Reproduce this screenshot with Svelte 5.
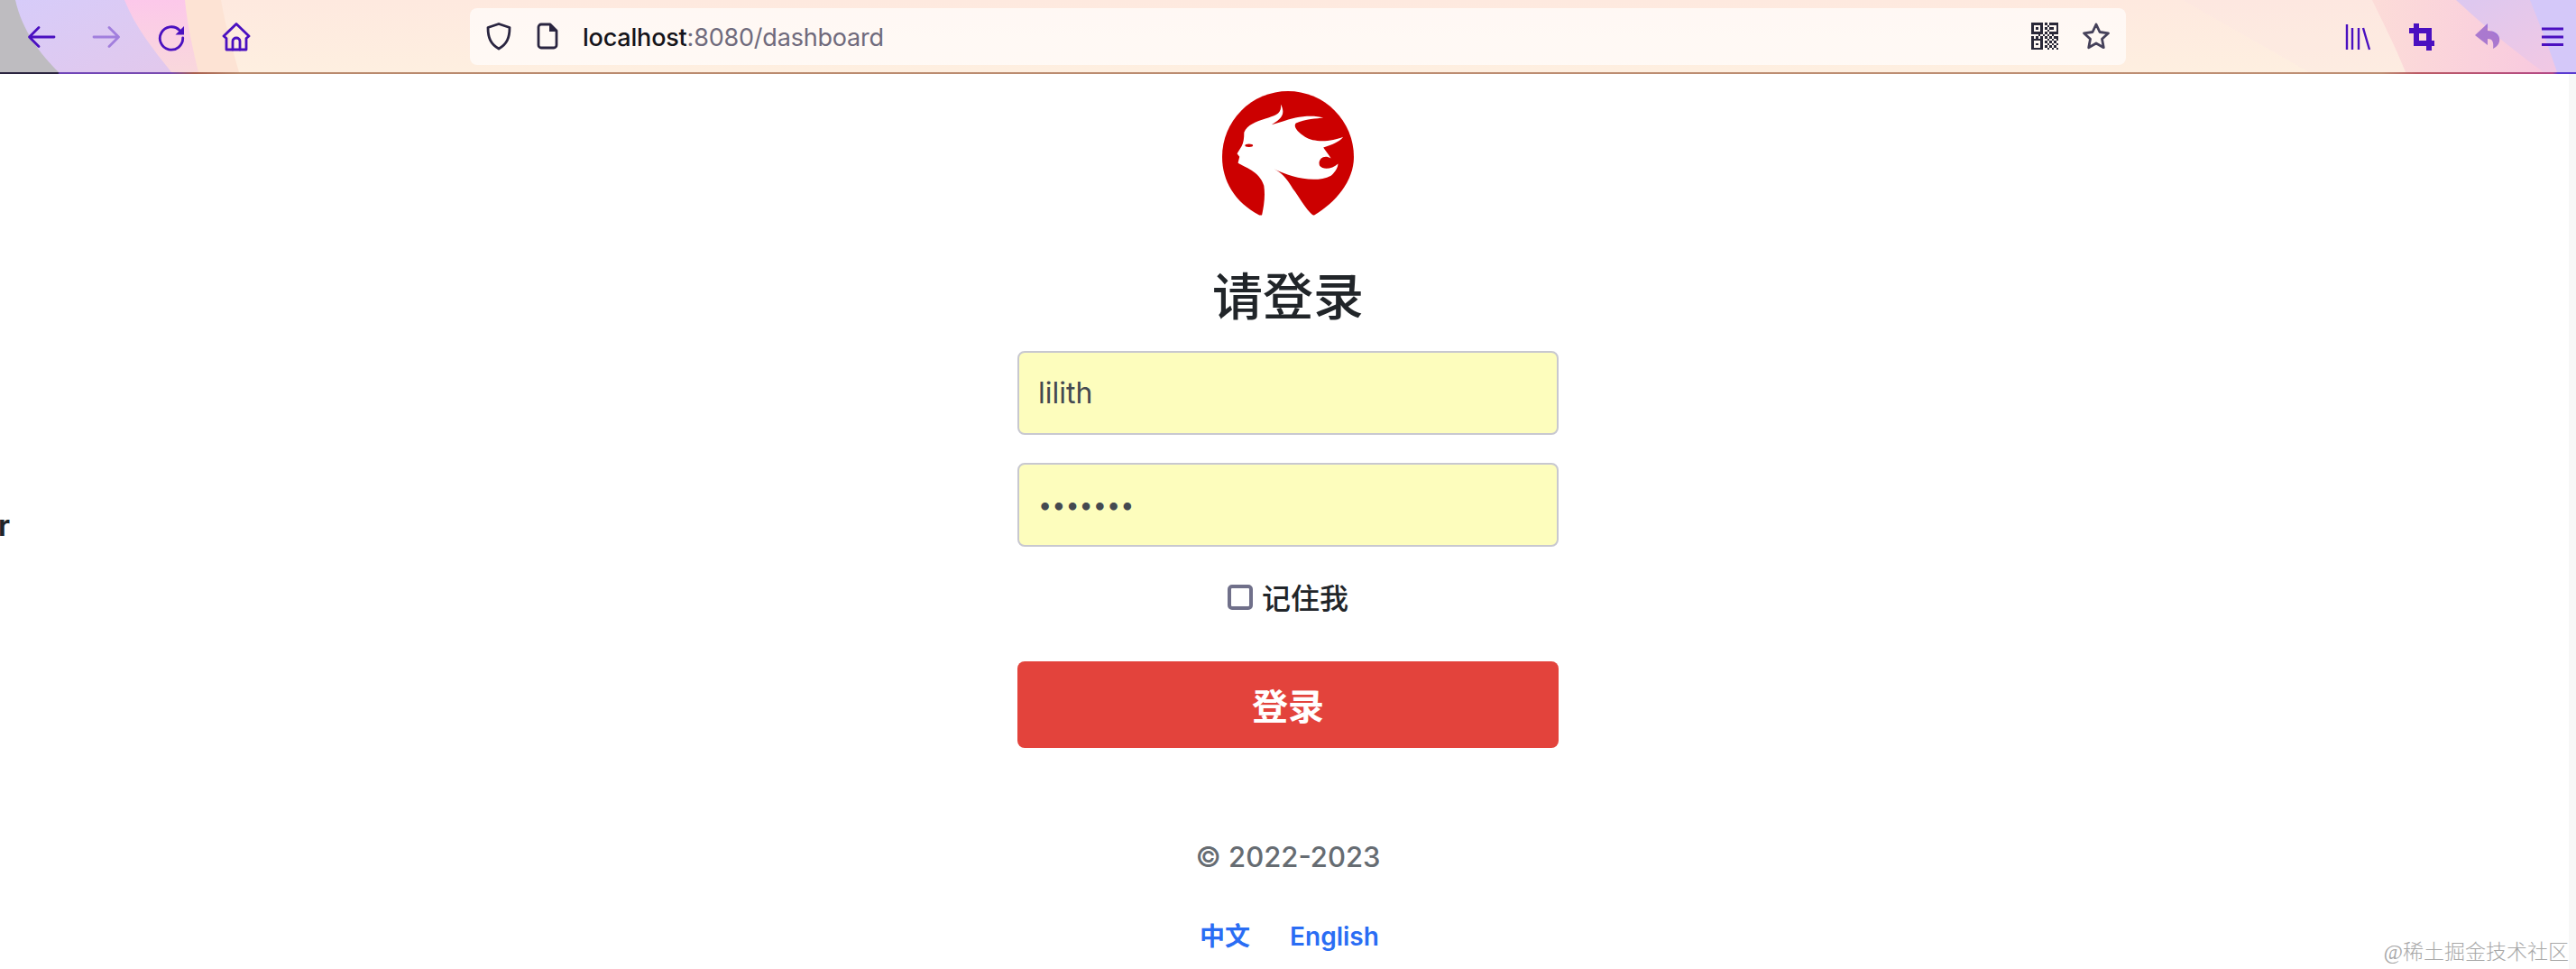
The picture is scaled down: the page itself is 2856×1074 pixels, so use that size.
<script>
  // QR glyph in the address bar, 1 = filled cell
  const qr = [
    "111110101111",
    "100010010001",
    "101010101101",
    "100010010001",
    "111110101111",
    "000101010100",
    "101010101011",
    "111110010101",
    "100010101010",
    "101010010101",
    "100010101010",
    "111110010101"
  ];
  const cells = [];
  qr.forEach((row, y) => {
    [...row].forEach((c, x) => {
      if (c === "1") cells.push({ x, y });
    });
  });
</script>

<div class="page">
  <header class="toolbar">
    <svg class="theme" viewBox="0 0 2856 80" preserveAspectRatio="none" aria-hidden="true">
      <defs>
        <linearGradient id="base" x1="0" y1="0" x2="0" y2="1">
          <stop offset="0" stop-color="#fee9df" />
          <stop offset="1" stop-color="#feefe0" />
        </linearGradient>
        <linearGradient id="pinkLeft" x1="0" y1="0" x2="0" y2="1">
          <stop offset="0" stop-color="#fcc8ea" />
          <stop offset="1" stop-color="#f9d8dc" />
        </linearGradient>
        <linearGradient id="lavLeft" x1="0" y1="0" x2="1" y2="1">
          <stop offset="0" stop-color="#d6ccfa" />
          <stop offset="1" stop-color="#e2c8ec" />
        </linearGradient>
        <linearGradient id="pinkRight" x1="0" y1="0" x2="1" y2="0">
          <stop offset="0" stop-color="#fcdcd8" />
          <stop offset="1" stop-color="#f8c6e0" />
        </linearGradient>
        <linearGradient id="lavRight" x1="0" y1="0" x2="1" y2="1">
          <stop offset="0" stop-color="#dcc8f0" />
          <stop offset="1" stop-color="#f4c8e2" />
        </linearGradient>
      </defs>
      <rect width="2856" height="80" fill="url(#base)" />
      <path d="M2420 0H2640L2680 80H2560Z" fill="#fbe6e4" opacity="0.3" />
      <path d="M0 0H245C250 30 258 55 265 80H0Z" fill="#fde3d4" />
      <path d="M0 0H205C208 30 214 55 220 80H0Z" fill="url(#pinkLeft)" />
      <path d="M0 0H138C150 30 170 55 190 80H0Z" fill="url(#lavLeft)" />
      <path d="M0 0H17C25 35 45 60 65 80H0Z" fill="#bebcc0" />
      <path d="M2630 0H2856V80H2667C2655 50 2642 25 2630 0Z" fill="url(#pinkRight)" />
      <path d="M2723 0H2856V80H2820C2785 55 2750 25 2723 0Z" fill="url(#lavRight)" />
      <path d="M2805 0H2856V80H2835C2825 50 2815 25 2805 0Z" fill="#d4c8f9" />
    </svg>

    <nav class="nav-left">
      <svg class="icon" viewBox="0 0 32 32" aria-hidden="true"><path d="M30 16H3M13 5.500 2.500 16 13 26.500" class="stroke" /></svg>
      <svg class="icon faded" viewBox="0 0 32 32" aria-hidden="true"><path d="M2 16h27M19 5.500 29.500 16 19 26.500" class="stroke" /></svg>
      <svg class="icon" viewBox="0 0 32 32" aria-hidden="true">
        <path d="M25 8.500A12.700 12.700 0 1 0 28.700 17" class="stroke" />
        <path d="M30 4v9.500h-9.500z" class="fill" />
      </svg>
      <svg class="icon" viewBox="0 0 32 32" aria-hidden="true">
        <path d="M16 1.500 30 15l-3 2.500v12.500H5V17.500L2 15Z" class="stroke" />
        <path d="M12 30V20.500a4 3.500 0 0 1 8 0V30" class="stroke" />
      </svg>
    </nav>

    <div class="urlbar">
      <svg class="icon dark" viewBox="0 0 32 32" aria-hidden="true"><path d="M16 2.500 28 6.500C28 18 25 25 16 30 7 25 4 18 4 6.500Z" class="stroke" /></svg>
      <svg class="icon dark page-icon" viewBox="0 0 32 32" aria-hidden="true">
        <path d="M19 3H9a3 3 0 0 0-3 3v20a3 3 0 0 0 3 3h14a3 3 0 0 0 3-3V10Z" class="stroke" />
        <path d="M18 3v8h8z" class="fill" />
      </svg>
      <span class="url"><span class="url-host">localhost</span><span class="url-rest">:8080/dashboard</span></span>
      <svg class="qr" viewBox="0 0 12 12" aria-hidden="true" shape-rendering="crispEdges">
        {#each cells as c}
          <rect x={c.x} y={c.y} width="1" height="1" />
        {/each}
      </svg>
      <svg class="icon muted star" viewBox="0 0 32 32" aria-hidden="true"><path d="M16 3l4 8.500 9.500 1.300-7 6.500 1.800 9.400L16 24l-8.300 4.700 1.800-9.400-7-6.500L12 11.500Z" class="stroke" /></svg>
    </div>

    <nav class="nav-right">
      <svg class="icon" viewBox="0 0 32 32" aria-hidden="true">
        <path d="M4 2v28M10 6v24M17 6v24M22 6l7 24" class="stroke thin" />
      </svg>
      <svg class="icon" viewBox="0 0 32 32" aria-hidden="true">
        <path d="M9 1v22h20M1 9h22v22" class="stroke bold" />
      </svg>
      <svg class="icon faded-strong" viewBox="0 0 32 32" aria-hidden="true">
        <path d="M16 1 2 14l14 11v-7c5 0 7 3 6 11 6-3 8-8 7-12-1-5-6-8-13-8z" class="fill" />
      </svg>
      <svg class="icon" viewBox="0 0 32 32" aria-hidden="true">
        <path d="M4 7h24M4 16h24M4 24.500h24" class="stroke thick-line" />
      </svg>
    </nav>
  </header>
  <div class="toolbar-line"></div>

  <main class="login">
    <svg class="logo" viewBox="198 65 432 408" role="img" aria-label="logo">
      <path d="M320 472C240 430 198 360 198 281A216 216 0 1 1 630 281C630 360 570 430 500 472Z" fill="#cc0000" />
      <path fill="#fff" d="M328 474H498C470 450 450 410 430 385C410 350 390 330 368 320C420 345 500 370 555 342C572 328 578 312 578 303C560 320 530 325 518 310C510 290 530 270 555 285C545 270 535 258 530 250C560 240 585 230 595 215C560 230 500 235 470 215C445 200 430 180 440 170C470 155 510 155 530 152C490 140 430 150 395 165L360 175C385 160 410 145 390 108C395 140 370 145 340 155C310 165 280 175 270 200C270 220 268 235 262 245L247 270L255 280L250 300C270 315 320 325 335 375C340 410 335 440 328 474Z" />
      <ellipse cx="286" cy="243" rx="13" ry="5" fill="#cc0000" />
    </svg>

    <h1 class="title">请登录</h1>

    <form class="form">
      <input class="field" type="text" value="lilith" />
      <input class="field secret" type="password" value="1234567" />
      <label class="remember">
        <input class="check" type="checkbox" />
        <span>记住我</span>
      </label>
      <button class="submit" type="button">登录</button>
    </form>

    <p class="copy">© 2022-2023</p>
    <div class="langs">
      <a href="#zh">中文</a>
      <a href="#en">English</a>
    </div>
  </main>

  <span class="stray">r</span>
  <span class="watermark">@稀土掘金技术社区</span>
  <div class="scroll-edge"></div>
</div>

<style>
  :global(body) {
    margin: 0;
    background: #fff;
  }
  .page {
    position: relative;
    height: 1074px;
    overflow: hidden;
    font-family: Inter, "Noto Sans CJK SC", sans-serif;
    color: #212529;
  }
  .toolbar {
    position: relative;
    display: flex;
    align-items: center;
    height: 80px;
    padding: 2px 10px 0 30px;
    box-sizing: border-box;
  }
  .theme {
    position: absolute;
    inset: 0;
    width: 100%;
    height: 100%;
  }
  .toolbar-line {
    height: 2px;
    background: linear-gradient(90deg, #2b2440 0, #2b2440 64px, #6f45b8 66px, #7a4cb0 190px, #a8604f 215px, #b98a6e 265px, #be8f74 2640px, #bc5c66 2680px, #b44a86 2830px, #5a3bd0 2836px);
  }
  .icon {
    position: relative;
    width: 32px;
    height: 32px;
    flex: none;
    color: #4a10c0;
  }
  .icon.dark {
    color: #2a2540;
  }
  .icon.muted {
    color: #45415a;
  }
  .faded {
    opacity: 0.4;
  }
  .faded-strong {
    opacity: 0.45;
  }
  .stroke {
    fill: none;
    stroke: currentColor;
    stroke-width: 2.800;
    stroke-linejoin: round;
    stroke-linecap: round;
  }
  .thin {
    stroke-width: 2.400;
    stroke-linecap: butt;
  }
  .thick-line {
    stroke-width: 3;
    stroke-linecap: butt;
  }
  .bold {
    stroke-width: 6;
    stroke-linecap: butt;
    stroke-linejoin: miter;
  }
  .fill {
    fill: currentColor;
  }
  .nav-left,
  .nav-right {
    position: relative;
    display: flex;
    align-items: center;
    gap: 40px;
  }
  .urlbar {
    position: relative;
    display: flex;
    align-items: center;
    width: 1836px;
    height: 63px;
    margin-left: 243px;
    margin-top: -2px;
    padding: 0 17px 0 16px;
    box-sizing: border-box;
    background: rgba(255, 255, 255, 0.66);
    border-radius: 8px;
  }
  .page-icon {
    margin-left: 22px;
  }
  .url {
    margin-left: 23px;
    padding-top: 2px;
    font-size: 27px;
    letter-spacing: -0.2px;
    color: #15141a;
    flex: 1;
  }
  .url-host {
    font-weight: 500;
  }
  .url-rest {
    color: #6f6a7c;
  }
  .qr {
    width: 30px;
    height: 30px;
    fill: #2a2838;
    flex: none;
  }
  .star {
    margin-left: 26px;
  }
  .nav-right {
    margin-left: auto;
  }
  .login {
    display: flex;
    flex-direction: column;
    align-items: center;
    padding-top: 19px;
  }
  .logo {
    width: 146px;
    height: 138px;
    display: block;
  }
  .title {
    margin: 48px 0 0;
    font-size: 56px;
    line-height: 84px;
    font-weight: 500;
    color: #212529;
  }
  .form {
    display: flex;
    flex-direction: column;
    align-items: center;
    width: 600px;
    margin-top: 18px;
  }
  .field {
    width: 100%;
    height: 93px;
    box-sizing: border-box;
    padding: 0 21px;
    margin-bottom: 31px;
    border: 2px solid #c8c8d0;
    border-radius: 8px;
    background: #fdfdbd;
    font-family: inherit;
    font-size: 32px;
    color: #444950;
    outline: none;
  }
  .secret {
    font-size: 27px;
  }
  .remember {
    display: flex;
    align-items: center;
    gap: 10px;
    height: 48px;
    font-size: 32px;
    font-weight: 500;
    color: #212529;
  }
  .check {
    appearance: none;
    width: 28px;
    height: 28px;
    margin: 2px 0 0;
    border: 4px solid #70708a;
    border-radius: 5px;
    background: #fff;
    box-sizing: border-box;
  }
  .submit {
    width: 100%;
    height: 96px;
    margin-top: 48px;
    border: none;
    border-radius: 8px;
    background: #e3433c;
    color: #fff;
    font-family: inherit;
    font-size: 40px;
    font-weight: 600;
  }
  .copy {
    margin: 97px 0 0;
    font-size: 31px;
    font-weight: 500;
    line-height: 48px;
    color: #666c72;
  }
  .langs {
    display: flex;
    align-items: baseline;
    gap: 44px;
    margin-top: 44px;
    margin-left: 3px;
    font-size: 28px;
    line-height: 40px;
    font-weight: 600;
  }
  .langs a {
    color: #2a6df4;
    text-decoration: none;
  }
  .stray {
    position: absolute;
    left: -2px;
    top: 563px;
    font-size: 32px;
    font-weight: 700;
    color: #212529;
  }
  .watermark {
    position: absolute;
    right: 8px;
    bottom: 4px;
    font-family: "Liberation Serif", "Noto Sans CJK SC", serif;
    font-size: 23px;
    font-weight: 300;
    color: #a8a8a8;
  }
  .scroll-edge {
    position: absolute;
    right: 0;
    top: 82px;
    bottom: 0;
    width: 8px;
    background: #f7f7f7;
  }
</style>
